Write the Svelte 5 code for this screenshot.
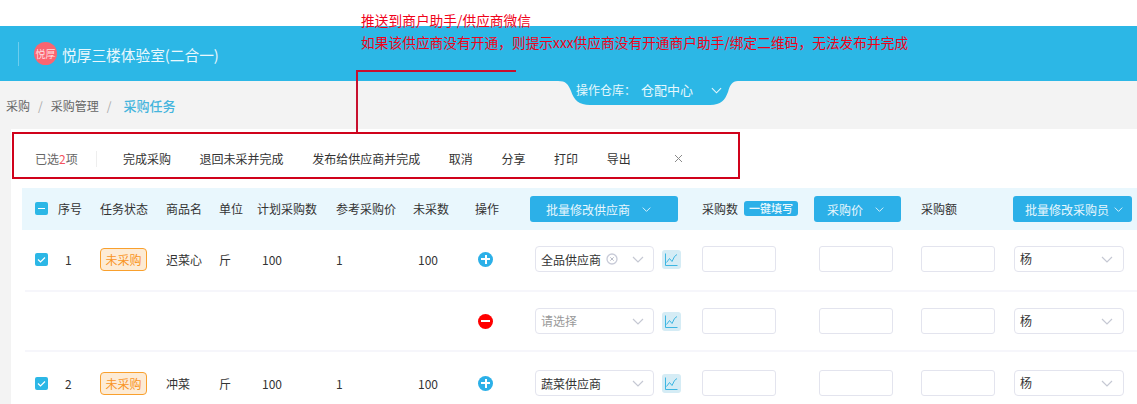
<script>
    const actions = ["完成采购", "退回未采并完成", "发布给供应商并完成", "取消", "分享", "打印", "导出"];
    const columns = ["序号", "任务状态", "商品名", "单位", "计划采购数", "参考采购价", "未采数", "操作"];
    const rows = [
        { no: 1, name: "迟菜心", unit: "斤", plan: 100, price: 1, left: 100, supplier: "全品供应商", clear: true },
        { sub: true, supplier: "" },
        { no: 2, name: "冲菜", unit: "斤", plan: 100, price: 1, left: 100, supplier: "蔬菜供应商" }
    ];
</script>

{#snippet chevron(cls)}
    <svg class={cls} viewBox="0 0 12 7" width="12" height="7"><path d="M1 1l5 5 5-5" fill="none" stroke="currentColor" stroke-width="1.2" /></svg>
{/snippet}

<div class="page">
    <header class="topbar">
        <div class="brand">
            <span class="logo">悦厚</span>
            <span class="title">悦厚三楼体验室(二合一)</span>
        </div>
    </header>

    <div class="warehouse">
        <svg class="tab" viewBox="0 0 180 24" width="180" height="24">
            <path d="M0 0C8 0 10 3 13 10C16 19 21 24 32 24H152C163 24 167 19 170 11C172 4 174 0 180 0Z" fill="#2cb7e6" />
        </svg>
        <span class="wh-label">操作仓库：</span>
        <span class="wh-name">仓配中心</span>
        {@render chevron("wh-arrow")}
    </div>

    <main class="main">
        <nav class="crumbs">
            <span>采购</span><i>/</i><span>采购管理</span><i>/</i><b>采购任务</b>
        </nav>

        <section class="panel">
            <div class="toolbar">
                <span class="selected">已选<em>2</em>项</span>
                <div class="actions">
                    {#each actions as a}
                        <span>{a}</span>
                    {/each}
                </div>
                <svg class="close" viewBox="0 0 9 9" width="9" height="9"><path d="M1 1l7 7M8 1l-7 7" stroke="#8a8a8a" fill="none" /></svg>
            </div>

            <div class="grid head">
                <span class="check partial"><i></i></span>
                {#each columns as c}
                    <span>{c}</span>
                {/each}
                <button class="bulk supplier">批量修改供应商{@render chevron("btn-arrow")}</button>
                <span class="qty">采购数<em>一键填写</em></span>
                <button class="bulk price">采购价{@render chevron("btn-arrow")}</button>
                <span>采购额</span>
                <button class="bulk buyer">批量修改采购员{@render chevron("btn-arrow")}</button>
            </div>

            {#each rows as r, i}
                <div class="grid row r{i}">
                    {#if r.sub}
                        <span></span><span></span><span></span><span></span><span></span><span></span><span></span><span></span>
                    {:else}
                        <span class="check">
                            <svg viewBox="0 0 13 13" width="13" height="13"><path d="M3 6.5l2.5 2.5L10 4.5" fill="none" stroke="#fff" stroke-width="1.2" /></svg>
                        </span>
                        <span class="no">{r.no}</span>
                        <span><span class="status">未采购</span></span>
                        <span>{r.name}</span>
                        <span>{r.unit}</span>
                        <span class="plan">{r.plan}</span>
                        <span>{r.price}</span>
                        <span class="left">{r.left}</span>
                    {/if}
                    <span class="round {r.sub ? 'minus' : 'plus'}"><i></i></span>
                    <div class="supplier-cell">
                        <div class="select" class:empty={r.sub}>
                            <span class="value">{r.supplier || "请选择"}</span>
                            {#if r.clear}
                                <svg class="clear" viewBox="0 0 12 12" width="12" height="12"><circle cx="6" cy="6" r="5" fill="none" stroke="#c8cbd8" stroke-width="1.3" /><path d="M4.3 4.3l3.4 3.4M7.7 4.3l-3.4 3.4" stroke="#b8bcc8" /></svg>
                            {/if}
                            {@render chevron("sel-arrow")}
                        </div>
                        <span class="chart">
                            <svg viewBox="0 0 15 15" width="15" height="15"><path d="M1.5 1.5v12h12" fill="none" stroke="#3db6e2" /><path d="M2.5 10.5l3-4 2.5 3 2.5-5 2.5-2" fill="none" stroke="#3db6e2" /></svg>
                        </span>
                    </div>
                    <div class="input w74"></div>
                    <div class="input w74 ml5"></div>
                    <div class="input w74"></div>
                    <div class="select buyer-sel">
                        <span class="value">杨</span>
                        {@render chevron("sel-arrow")}
                    </div>
                </div>
            {/each}
        </section>
    </main>

    <div class="note">
        <p>推送到商户助手/供应商微信</p>
        <p>如果该供应商没有开通，则提示xxx供应商没有开通商户助手/绑定二维码，无法发布并完成</p>
    </div>
    <div class="leader"></div>
</div>

<style>
    :global(body) {
        font-family: "Noto Sans CJK SC", "Noto Sans", sans-serif;
        font-size: 12px;
        color: #333;
    }
    .page {
        position: relative;
        height: 404px;
        overflow: hidden;
        padding-top: 26px;
        box-sizing: border-box;
        background: #fff;
    }
    .topbar {
        height: 55px;
        background: #2cb7e6;
        display: flex;
        align-items: center;
        padding-left: 18px;
    }
    .brand {
        display: flex;
        align-items: center;
        height: 24px;
        border-left: 1px solid #6ccdee;
        padding-left: 15px;
        color: #eaf8fd;
        font-size: 14.7px;
    }
    .logo {
        width: 23px;
        height: 23px;
        border-radius: 50%;
        background: #fb6570;
        color: #fbdfe1;
        font-size: 10px;
        line-height: 23px;
        text-align: center;
        margin-right: 5px;
        white-space: nowrap;
    }
    .title {
        position: relative;
        top: 1px;
    }
    .warehouse {
        position: absolute;
        left: 558px;
        top: 81px;
        width: 180px;
        height: 24px;
        color: #e6f7fd;
        font-size: 13px;
        line-height: 18px;
    }
    .tab {
        position: absolute;
        left: 0;
        top: 0;
    }
    .wh-label, .wh-name, .wh-arrow {
        position: absolute;
    }
    .wh-label {
        left: 18px;
        top: 0;
        font-size: 12px;
    }
    .wh-name {
        left: 83px;
        top: 0;
    }
    .wh-arrow {
        left: 153px;
        top: 6px;
        width: 11px;
    }
    .main {
        background: #f3f3f3;
        height: 323px;
    }
    .crumbs {
        height: 48px;
        padding-left: 6px;
        display: flex;
        align-items: center;
        color: #666;
    }
    .crumbs i {
        font-style: normal;
        color: #aaa;
        margin: 0 8px;
    }
    .crumbs b {
        font-weight: 500;
        font-size: 13px;
        color: #45b5dd;
        margin-left: 4px;
    }
    .panel {
        margin-left: 11px;
        height: 275px;
        background: #fff;
        padding-top: 3px;
        box-sizing: border-box;
    }
    .toolbar {
        margin-left: 1px;
        width: 728px;
        height: 47px;
        box-sizing: border-box;
        border: 2px solid #d0021b;
        display: flex;
        align-items: center;
        padding: 6px 0 0 21px;
        color: #333;
    }
    .selected {
        width: 61px;
        height: 16px;
        line-height: 16px;
        border-right: 1px solid #eee;
        color: #666;
    }
    .selected em {
        font-style: normal;
        color: #f5535e;
    }
    .actions {
        display: flex;
        gap: 28.6px;
        margin-left: 26px;
    }
    .close {
        margin-left: 43px;
    }
    .grid {
        display: grid;
        grid-template-columns: 23px 42px 66px 53px 38px 79px 77px 62px 55px 172px 112px 107px 92px auto;
        align-items: center;
    }
    .head {
        margin: 9px 0 0 11px;
        height: 42px;
        padding: 0 0 1px 13px;
        box-sizing: border-box;
        background: #e9f7fd;
    }
    .head .bulk {
        margin-top: 1px;
    }
    .row {
        margin-left: 14px;
        padding-left: 10px;
        border-bottom: 2px solid #f6f6fb;
        box-sizing: border-box;
    }
    .r0 {
        height: 62px;
        padding-bottom: 2px;
    }
    .r1 {
        height: 60px;
    }
    .r2 {
        height: 64px;
        padding-bottom: 2px;
        border-bottom: none;
    }
    .check {
        width: 13px;
        height: 13px;
        background: #2cb7e6;
        border-radius: 2px;
        display: flex;
        align-items: center;
        justify-content: center;
    }
    .partial i {
        width: 7px;
        height: 1.5px;
        background: #fff;
    }
    .bulk {
        border: none;
        background: #2cb0e8;
        color: #e8f7fd;
        border-radius: 3px;
        height: 26px;
        font: inherit;
        padding: 0;
        display: flex;
        align-items: center;
    }
    .bulk.supplier {
        width: 148px;
        padding-left: 16px;
    }
    .bulk.price {
        width: 87px;
        padding-left: 13px;
    }
    .bulk.buyer {
        width: 119px;
        padding-left: 12px;
    }
    .btn-arrow {
        margin-left: 12px;
        width: 9px;
    }
    .bulk.buyer .btn-arrow {
        margin-left: 5px;
    }
    .qty {
        display: flex;
        align-items: center;
    }
    .qty em {
        font-style: normal;
        margin-left: 6px;
        width: 54px;
        height: 15px;
        line-height: 15px;
        font-size: 11px;
        text-align: center;
        border-radius: 3px;
        background: #2cb0e8;
        color: #eaf8fd;
        font-weight: 500;
    }
    .no {
        padding-left: 7px;
    }
    .status {
        display: inline-block;
        width: 47px;
        height: 23px;
        line-height: 21px;
        box-sizing: border-box;
        text-align: center;
        border: 1px solid #f9a02d;
        background: #fdebd5;
        color: #f9941e;
        border-radius: 4px;
    }
    .plan {
        padding-left: 5px;
    }
    .left {
        padding-left: 5px;
    }
    .round {
        width: 15px;
        height: 15px;
        border-radius: 50%;
        background: #2cb0e8;
        margin-left: 3px;
        position: relative;
    }
    .round i {
        position: absolute;
        left: 3px;
        top: 6.5px;
        width: 9px;
        height: 2px;
        background: #fff;
    }
    .round.plus::after {
        content: "";
        position: absolute;
        left: 6.5px;
        top: 3px;
        width: 2px;
        height: 9px;
        background: #fff;
    }
    .round.minus {
        background: #f00;
    }
    .supplier-cell {
        display: flex;
        align-items: center;
        padding-left: 5px;
        gap: 8px;
    }
    .select {
        width: 119px;
        height: 26px;
        box-sizing: border-box;
        border: 1px solid #e3e4ee;
        border-radius: 4px;
        display: flex;
        align-items: center;
        padding: 0 9px 0 5px;
        background: #fff;
        color: #333;
    }
    .select.empty {
        color: #999;
    }
    .empty .value {
        margin-top: -2px;
    }
    .value {
        flex: none;
    }
    .clear {
        margin-left: 5px;
    }
    .sel-arrow {
        margin-left: auto;
        color: #c5c8d3;
    }
    .buyer-sel {
        width: 110px;
        margin-left: 1px;
        padding-right: 10px;
    }
    .buyer-sel .value {
        margin-top: -2px;
    }
    .chart {
        width: 19px;
        height: 19px;
        border-radius: 3px;
        background: #d5ecf5;
        display: flex;
        align-items: center;
        justify-content: center;
    }
    .input {
        height: 26px;
        box-sizing: border-box;
        border: 1px solid #e3e4ee;
        border-radius: 3px;
    }
    .w74 {
        width: 74px;
    }
    .ml5 {
        margin-left: 5px;
    }
    .note {
        position: absolute;
        left: 361px;
        top: 9px;
        color: #f0021a;
        font-size: 13.72px;
        line-height: 22px;
        white-space: nowrap;
    }
    .note p {
        margin: 0;
    }
    .leader {
        position: absolute;
        left: 356px;
        top: 70px;
        width: 160px;
        height: 62px;
        box-sizing: border-box;
        border-left: 2px solid #c8102e;
        border-top: 2px solid #c8102e;
    }
</style>
